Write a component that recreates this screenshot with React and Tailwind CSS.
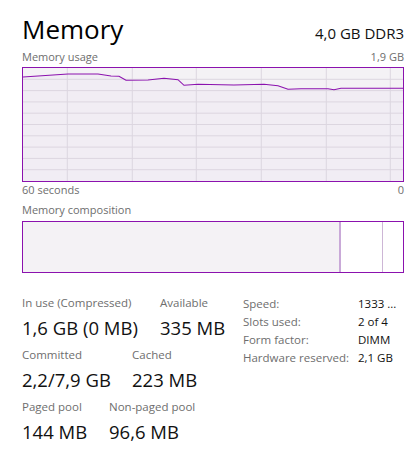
const linePoints = [
  [0, 9], [45, 6], [75, 6], [88, 8], [96, 8.3], [103, 12.3], [125, 12], [141, 10.3], [155, 11.7],
  [161, 17.3], [175, 16.3], [211, 17], [241, 16.3], [255, 17.7], [265, 21.3], [278, 20.7],
  [305, 20.7], [311, 21.7], [318, 20.3], [382, 20.3],
]

const vLines = [45.3, 110.3, 174.3, 239.3, 304.3, 368.3]
const hLines = [1, 2, 3, 4, 5, 6, 7, 8, 9].map((i) => i * 11.3)

function UsageGraph() {
  const pts = linePoints.map((p) => p.join(',')).join(' ')
  const area = `0,113 ${pts} 382,113`
  return (
    <div className="mt-[3px] h-[115px] w-[382px] border border-[#8b12ae] bg-[#f4f2f5]">
      <svg width="380" height="113" viewBox="0 0 380 113" className="block">
        <polygon points={area} fill="#f1edf4" />
        {vLines.map((x) => (
          <line key={x} x1={x - 1} y1="0" x2={x - 1} y2="113" stroke="#dcd6e0" strokeWidth="1" />
        ))}
        {hLines.map((y) => (
          <line key={y} x1="0" y1={y} x2="380" y2={y} stroke="#dcd6e0" strokeWidth="1" />
        ))}
        <polyline points={pts} fill="none" stroke="#8b12ae" strokeWidth="1.1" />
      </svg>
    </div>
  )
}

function Stat({ label, value, w }) {
  return (
    <div className={w}>
      <div className="text-[11.5px] leading-[16px] text-[#6e6e6e] whitespace-nowrap">{label}</div>
      <div className="mt-[6px] text-[18.5px] leading-[22px] text-[#111] whitespace-nowrap">{value}</div>
    </div>
  )
}

const details = [
  ['Speed:', '1333 ...'],
  ['Slots used:', '2 of 4'],
  ['Form factor:', 'DIMM'],
  ['Hardware reserved:', '2,1 GB'],
]

export default function App() {
  return (
    <div className="w-[412px] h-[460px] bg-white pl-[22px] pr-[8px] font-['Open_Sans',sans-serif] text-black">
      <div className="flex items-baseline justify-between pt-[13px]">
        <h1 className="text-[26px] leading-[32px]">Memory</h1>
        <span className="text-[15px] text-[#111]">4,0 GB DDR3</span>
      </div>

      <div className="mt-[5px] flex justify-between text-[11px] leading-[14px] text-[#6e6e6e]">
        <span>Memory usage</span>
        <span>1,9 GB</span>
      </div>
      <UsageGraph />
      <div className="mt-[1px] flex justify-between text-[11px] leading-[14px] text-[#6e6e6e]">
        <span>60 seconds</span>
        <span>0</span>
      </div>

      <div className="mt-[6px] text-[11px] leading-[14px] text-[#6e6e6e]">Memory composition</div>
      <div className="mt-[4px] flex h-[52px] w-[382px] border border-[#8b12ae]">
        <div className="w-[316px] bg-[#f4f2f5]" />
        <div className="w-[2px] bg-[#c9a9d8]" />
        <div className="w-[41px] bg-white" />
        <div className="w-[1px] bg-[#cdb6d6]" />
        <div className="flex-1 bg-white" />
      </div>

      <div className="mt-[22px] flex items-start">
        <div className="flex w-[221px] flex-col gap-[8px]">
          <div className="flex">
            <Stat w="w-[138px]" label="In use (Compressed)" value="1,6 GB (0 MB)" />
            <Stat label="Available" value="335 MB" />
          </div>
          <div className="flex">
            <Stat w="w-[110px]" label="Committed" value="2,2/7,9 GB" />
            <Stat label="Cached" value="223 MB" />
          </div>
          <div className="flex">
            <Stat w="w-[87px]" label="Paged pool" value="144 MB" />
            <Stat label="Non-paged pool" value="96,6 MB" />
          </div>
        </div>
        <div className="grid grid-cols-[115px_1fr] text-[11.5px] leading-[18px]">
          {details.map(([k, v]) => (
            <div key={k} className="contents">
              <span className="text-[#6e6e6e] whitespace-nowrap">{k}</span>
              <span className="text-[#111] whitespace-nowrap">{v}</span>
            </div>
          ))}
        </div>
      </div>
    </div>
  )
}
